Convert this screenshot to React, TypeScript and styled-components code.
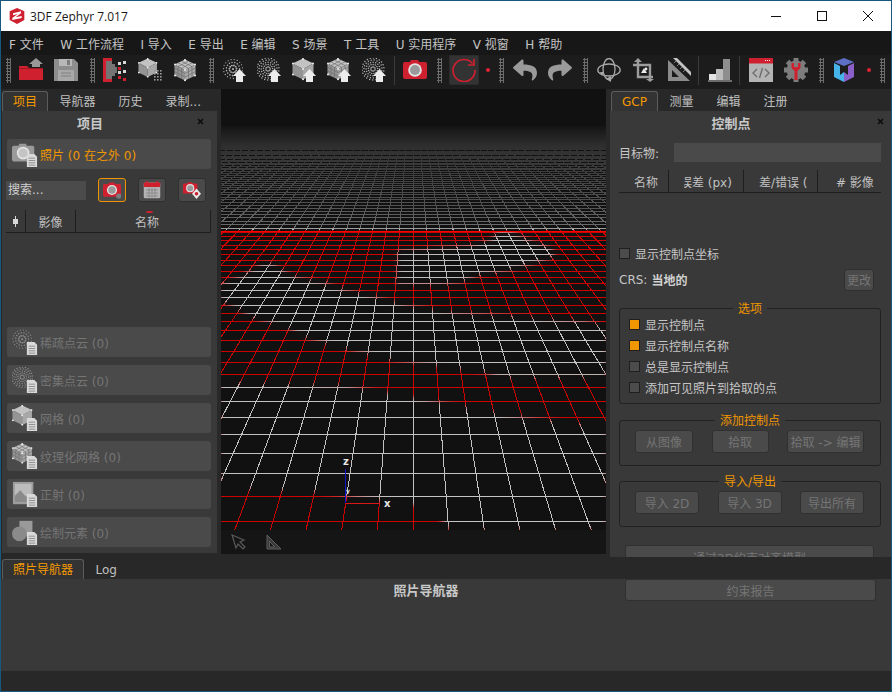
import React from "react";
import styled, { createGlobalStyle } from "styled-components";
import { FaReply, FaShare } from "react-icons/fa";

const GlobalStyle = createGlobalStyle`
  html, body {
    margin: 0;
    background: #282828;
  }
  body {
    width: 892px;
    height: 692px;
    overflow: hidden;
    font-family: "DejaVu Sans", "Noto Sans CJK SC", sans-serif;
    font-size: 12px;
    color: #c6c6c6;
  }
`;

/* ---------- icons ---------- */

const RED = "#cf2030";

const Svg = ({ size = 24, children }: { size?: number; children: React.ReactNode }) => (
  <svg width={size} height={size} viewBox="0 0 24 24">
    {children}
  </svg>
);

const Cloud = ({ dense, fill, r = 10 }: { dense?: boolean; fill: string; r?: number }) => {
  const dots: React.ReactNode[] = [];
  const rings = dense ? [0.2, 0.42, 0.62, 0.82, 1] : [0, 0.38, 0.7, 1];
  rings.forEach((k, i) => {
    const count = k === 0 ? 1 : Math.round((dense ? 10 : 7) + i * (dense ? 3 : 4));
    for (let j = 0; j < count; j++) {
      const a = (j / count) * Math.PI * 2 + i * 0.4;
      dots.push(
        <circle
          key={`${i}-${j}`}
          cx={11 + Math.cos(a) * r * k}
          cy={11 + Math.sin(a) * r * k}
          r={dense ? 0.75 : 1.1 - k * 0.45}
          fill={fill}
        />
      );
    }
  });
  return <>{dots}</>;
};

const CubeShape = ({ shade = "#c2c2c2", textured }: { shade?: string; textured?: boolean }) => (
  <>
    <polygon points="11,0.5 21.5,5.5 11,11 0.5,5.5" fill={shade} />
    <polygon points="0.5,5.5 11,11 11,21.5 0.5,16.5" fill="#949494" />
    <polygon points="21.5,5.5 11,11 11,21.5 21.5,16.5" fill="#a8a8a8" />
    {textured && (
      <g stroke="#6f6f6f" strokeWidth="0.7" fill="none">
        <path d="M4 3.8l10.5 5.4M7.5 2.2L18 7.6M18 3.8L7.5 9.2M14.5 2.2L4 7.6" />
        <path d="M4 7.4v10.8M7.5 9.1v10.8M14.5 9.1v10.8M18 7.4v10.8" />
        <path d="M.5 9l10.5 5.5L21.5 9M.5 12.6L11 18l10.5-5.4" />
      </g>
    )}
    <g fill="#eee">
      <circle cx="11" cy="1" r="1" />
      <circle cx="1" cy="5.5" r="1" />
      <circle cx="21" cy="5.5" r="1" />
      <circle cx="11" cy="11" r="1" />
      <circle cx="1" cy="16.5" r="1" />
      <circle cx="21" cy="16.5" r="1" />
      <circle cx="11" cy="21.2" r="1" />
    </g>
  </>
);

const UpArrow = () => (
  <polygon points="17.5,11 24,18 21,18 21,24 14,24 14,18 11,18" fill="#ececec" />
);

const CameraShape = ({ body = RED, lens = "#9a9a9a" }: { body?: string; lens?: string }) => (
  <>
    <path d="M7 4l1-2h7l1 2h6a2 2 0 0 1 2 2v13a2 2 0 0 1-2 2H2a2 2 0 0 1-2-2V6a2 2 0 0 1 2-2z" fill={body} />
    <circle cx="12" cy="12" r="6.8" fill="#e4e4e4" />
    <circle cx="12" cy="12" r="5" fill={lens} />
  </>
);

const FolderIcon = () => (
  <Svg>
    <path d="M0 8h8l2 2h14v12H0z" fill={RED} />
    <rect x="0" y="10" width="24" height="1" fill="#a11824" />
    <polygon points="17,0 24,6 21,6 21,9 13,9 13,6 10,6" fill="#989898" />
  </Svg>
);

const SaveIcon = () => (
  <Svg>
    <path d="M0 1h20l4 4v18H0z" fill="#8d8d8d" />
    <rect x="5" y="1" width="13" height="7" fill="#b8b8b8" />
    <rect x="13" y="2" width="3" height="5" fill="#7c7c7c" />
    <rect x="4" y="12" width="16" height="11" fill="#a8a8a8" />
    <path d="M7 15h10M7 18h10" stroke="#808080" />
  </Svg>
);

const DissolveIcon = () => (
  <Svg>
    <rect x="0" y="0" width="3" height="24" fill={RED} />
    <rect x="3" y="0" width="6" height="3" fill={RED} />
    <rect x="3" y="21" width="6" height="3" fill={RED} />
    <path d="M3 3h6v3h3v3h2v6h-2v3H9v3H3z" fill="#747474" />
    <g fill="#d8d8d8">
      <rect x="15" y="4" width="3" height="3" />
      <rect x="15" y="13" width="3" height="3" />
      <rect x="20" y="3" width="3" height="3" />
      <rect x="20" y="12" width="3" height="3" />
    </g>
    <g fill={RED}>
      <rect x="15" y="9" width="3" height="3" />
      <rect x="20" y="20" width="3" height="3" />
      <rect x="15" y="18" width="3" height="3" />
    </g>
  </Svg>
);

const CubeDotsIcon = () => (
  <Svg>
    <g transform="scale(0.88)">
      <CubeShape />
    </g>
    <g fill="#9c9c9c">
      {[0, 1, 2, 3].map((i) =>
        [0, 1, 2].map((j) => <rect key={`${i}${j}`} x={16 + j * 3} y={12 + i * 3} width="1.6" height="1.6" />)
      )}
    </g>
  </Svg>
);

const TexCubeIcon = () => (
  <Svg>
    <g transform="translate(1 1)">
      <CubeShape textured />
    </g>
  </Svg>
);

const CloudUpIcon = ({ dense }: { dense?: boolean }) => (
  <Svg>
    <Cloud dense={dense} fill="#b0b0b0" r={dense ? 11 : 9.5} />
    <UpArrow />
  </Svg>
);

const CubeUpIcon = ({ textured }: { textured?: boolean }) => (
  <Svg>
    <CubeShape textured={textured} />
    <UpArrow />
  </Svg>
);

const CameraIcon = () => (
  <Svg>
    <CameraShape />
  </Svg>
);

const RefreshIcon = () => (
  <Svg>
    <path d="M20.5 5.5A11 11 0 1 0 23 12" fill="none" stroke={RED} strokeWidth="1.7" />
    <path d="M22 1v6h-6" fill="none" stroke={RED} strokeWidth="1.7" />
  </Svg>
);

const OrbitIcon = () => (
  <Svg>
    <g fill="none" stroke="#a8a8a8" strokeWidth="1.3">
      <ellipse cx="12" cy="12" rx="11.2" ry="6" />
      <ellipse cx="12" cy="11" rx="6" ry="10.5" />
    </g>
    <polygon points="9,21 14,18 14,24" fill="#a8a8a8" />
    <polygon points="3,14 7,14 5,18" fill="#a8a8a8" />
  </Svg>
);

const CropIcon = () => (
  <Svg>
    <g fill="none" stroke="#9c9c9c" strokeWidth="2.4">
      <path d="M6 4v15h15" />
      <path d="M1 7h17v14" />
    </g>
    <polygon points="6,0 10,4 2,4" fill="#9c9c9c" />
    <polygon points="18,24 14,21 22,21" fill="#9c9c9c" />
    <polygon points="9,15 12,10 15,15" fill="#e8e8e8" />
    <circle cx="14" cy="11" r="1.4" fill="#e8e8e8" />
  </Svg>
);

const RulerIcon = () => (
  <Svg>
    <path d="M1 2v21h22zM5 12l7 7H5z" fill="#8b8b8b" fillRule="evenodd" />
    <polygon points="6,0 10,0 24,14 24,18" fill="#c4c4c4" />
    <path d="M9 3l-2 2M12 6l-2 2M15 9l-2 2M18 12l-2 2" stroke="#7a7a7a" />
  </Svg>
);

const StairsIcon = () => (
  <Svg>
    <rect x="1" y="16" width="7" height="6" fill="#e2e2e2" />
    <rect x="8" y="11" width="7" height="11" fill="#bcbcbc" />
    <rect x="15" y="1" width="7" height="21" fill="#8e8e8e" />
    <rect x="0" y="22" width="24" height="2" fill="#6c6c6c" />
  </Svg>
);

const CodeIcon = () => (
  <Svg>
    <rect x="0" y="0" width="24" height="24" fill="#b4b4b4" />
    <rect x="0" y="0" width="24" height="5.5" fill={RED} />
    <path d="M16 2.5h5" stroke="#eee" strokeDasharray="1 1" />
    <path d="M8 11l-4 4 4 4M16 11l4 4-4 4M13.5 10l-3 10" fill="none" stroke="#6e6e6e" strokeWidth="1.4" />
  </Svg>
);

const GearIcon = () => (
  <Svg>
    <g fill="#7d7d7d">
      <circle cx="12" cy="12" r="9.5" />
      {[0, 45, 90, 135, 180, 225, 270, 315].map((a) => (
        <rect key={a} x="9.5" y="0" width="5" height="5" transform={`rotate(${a} 12 12)`} />
      ))}
    </g>
    <path d="M7.5 5v5l3 3v9h3v-9l3-3V5h-2.5v4h-4V5z" fill={RED} />
  </Svg>
);

const MetaCubeIcon = () => (
  <Svg>
    <polygon points="11,0 21,4 11,8 1,4" fill="#5c6fc4" />
    <polygon points="1,5 7,8 7,17 11,14 11,24 1,19" fill="#46b4e8" />
    <polygon points="21,5 15,8 15,17 11,14 11,24 21,19" fill="#8a5fc8" />
  </Svg>
);

const TitleLogo = () => (
  <svg width="16" height="16" viewBox="0 0 24 24">
    <polygon points="12,0 23,5 23,18 12,24 1,18 1,5" fill={RED} />
    <path d="M6 8l12-3v3l-8 6 9-2v3L5 18v-3l8-6-7 2z" fill="#fff" />
  </svg>
);

const DocBadge = () => (
  <g>
    <path d="M16 14h8l3 3v11H16z" fill="#d9d9d9" />
    <path d="M18 18.5h7M18 21h7M18 23.5h7M18 26h7" stroke="#8a8a8a" />
  </g>
);

const PanelIcon = ({ children }: { children: React.ReactNode }) => (
  <svg width="26" height="26" viewBox="0 0 28 28">
    {children}
    <DocBadge />
  </svg>
);

const CursorIcon = () => (
  <svg width="16" height="16" viewBox="0 0 16 16">
    <path d="M1 1l12 5-4 2 5 5-2 2-5-5-2 4z" fill="none" stroke="#5a5a5a" strokeWidth="1.2" />
  </svg>
);

const SetSquareIcon = () => (
  <svg width="16" height="16" viewBox="0 0 16 16">
    <path d="M1 1v14h14zM3.5 7l5 6h-5z" fill="#3a3a3a" stroke="#5e5e5e" fillRule="evenodd" />
  </svg>
);

const CloseMark = () => (
  <svg width="7" height="7" viewBox="0 0 7 7">
    <path d="M1 1l5 5M6 1L1 6" stroke="#0c0c0c" strokeWidth="1.6" />
  </svg>
);

/* ---------- the 3D viewport drawing ---------- */

const HORIZON = 50;
const CENTER_X = 413;
const SLOPE = 0.0743;
const FLOOR_Y = 530;
const TOP_Y = 126;

const rowY = (n: number) => Math.round(HORIZON + 1 / (0.002123 + 0.0001204 * n)) + 0.5;

const rows = Array.from({ length: 92 }, (_, i) => rowY(i)).filter((y) => y > TOP_Y);
const columns = Array.from({ length: 73 }, (_, i) => i - 36);

const GridLines = ({ stroke }: { stroke: string }) => (
  <g stroke={stroke} strokeWidth="1" shapeRendering="crispEdges" fill="none">
    {rows.map((y) => (
      <line key={y} x1="221" x2="606" y1={y} y2={y} />
    ))}
    {columns.map((i) => (
      <line
        key={i}
        x1={CENTER_X + i * SLOPE * (TOP_Y - HORIZON)}
        y1={TOP_Y}
        x2={CENTER_X + i * SLOPE * (FLOOR_Y - HORIZON)}
        y2={FLOOR_Y}
      />
    ))}
  </g>
);

const clearAreas = [
  "497,232 512,232 530,240 552,248 556,255 540,262 512,270 480,275 462,282 440,285 397,285 397,250 440,247 470,245 490,240",
  "262,263 272,263 283,270 297,277 323,282 343,289 377,297 407,305 455,312 585,321 607,326 607,378 500,378 483,372 390,360 347,349 307,338 288,328 253,318 238,310 220,300 220,285 227,281 240,276 253,269",
  "220,382 345,385 430,400 510,415 607,428 607,530 450,530 430,508 320,492 220,488",
];

const GridDrawing = () => (
  <svg width="385" height="441" viewBox="221 89 385 441" style={{ display: "block" }}>
    <defs>
      <linearGradient id="gridFade" gradientUnits="userSpaceOnUse" x1="0" y1="125" x2="0" y2="530">
        <stop offset="0" stopColor="#131313" />
        <stop offset="0.05" stopColor="#2e2e2e" />
        <stop offset="0.2" stopColor="#525252" />
        <stop offset="0.255" stopColor="#707070" />
        <stop offset="0.256" stopColor="#bdbdbd" />
        <stop offset="1" stopColor="#c4c4c4" />
      </linearGradient>
      <filter id="soft" x="-5%" y="-5%" width="110%" height="110%">
        <feGaussianBlur stdDeviation="2.5" />
      </filter>
      <mask id="redMask" maskUnits="userSpaceOnUse" x="221" y="89" width="385" height="441">
        <rect x="221" y="89" width="385" height="441" fill="#fff" />
        <g filter="url(#soft)" fill="#000">
          {clearAreas.map((p) => (
            <polygon key={p} points={p} />
          ))}
        </g>
      </mask>
      <clipPath id="redFloor">
        <rect x="221" y="230" width="385" height="300" />
      </clipPath>
    </defs>
    <rect x="221" y="89" width="385" height="441" fill="#111" />
    <GridLines stroke="url(#gridFade)" />
    <g clipPath="url(#redFloor)">
      <g mask="url(#redMask)">
        <GridLines stroke="#cc0000" />
      </g>
    </g>
    <line x1="221" x2="606" y1="231.5" y2="231.5" stroke="#ff0000" shapeRendering="crispEdges" />
    <line x1="345.5" x2="345.5" y1="469" y2="503" stroke="#1414c8" shapeRendering="crispEdges" />
    <line x1="346" x2="380" y1="503.5" y2="503.5" stroke="#d81818" shapeRendering="crispEdges" />
    <g fill="#e8e8e8" fontFamily="'DejaVu Sans', sans-serif" fontWeight="700" fontSize="10">
      <text x="343" y="465">z</text>
      <text x="384" y="507">x</text>
      <text x="346" y="493" fontSize="6">y</text>
    </g>
  </svg>
);

/* ---------- page structure ---------- */

const Frame = styled.div`
  box-sizing: border-box;
  width: 892px;
  height: 692px;
  border: 1px solid #17587c;
  display: flex;
  flex-direction: column;
  background: #282828;
  overflow: hidden;
`;

const TitleBar = styled.header`
  height: 30px;
  flex: none;
  background: #fff;
  color: #1a1a1a;
  display: flex;
  align-items: center;
  padding-left: 8px;
  gap: 5px;
  font-size: 12px;
`;

const TitleText = styled.span`
  flex: 1;
  font-family: "Open Sans", "Noto Sans", sans-serif;
`;

const WindowButton = styled.div`
  width: 46px;
  height: 30px;
  margin-left: -5px;
  display: flex;
  align-items: center;
  justify-content: center;
`;

const MenuBar = styled.nav`
  height: 24px;
  flex: none;
  background: #171717;
  display: flex;
  align-items: center;
  gap: 16.5px;
  padding-left: 8px;
`;

const MenuItem = styled.span`
  white-space: pre;
  color: #c4c4c4;
`;

const Toolbar = styled.div`
  height: 34px;
  flex: none;
  box-sizing: border-box;
  background: #1c1c1c;
  padding: 0 0 4px;
  display: flex;
  align-items: center;
`;

const Tool = styled.div<{ $active?: boolean }>`
  width: 35px;
  height: 30px;
  flex: none;
  display: flex;
  align-items: center;
  justify-content: center;
  ${(p) =>
    p.$active &&
    "background: #333; border-radius: 2px; box-shadow: inset 0 0 0 1px #2c2c2c; margin: 0 2px 0 4.5px; width: 30px;"}
`;

const Grip = styled.div`
  width: 5px;
  height: 25px;
  flex: none;
  margin: 0 3px 0 6px;
  background-image: radial-gradient(circle at 1.5px 1.5px, #6c6c6c 1px, transparent 1.2px);
  background-size: 3px 3px;
`;

const FirstGrip = styled(Grip)`
  margin-left: 4.5px;
`;

const NarrowGrip = styled(Grip)`
  margin-left: 4px;
`;

const ToolDivider = styled.div`
  width: 1px;
  height: 29px;
  flex: none;
  margin: 0 3px 0 2px;
  background: #3a3a3a;
`;

const RedDot = styled.div`
  width: 14px;
  flex: none;
  display: flex;
  justify-content: center;
  &::after {
    content: "";
    width: 4px;
    height: 4px;
    border-radius: 50%;
    background: #e02234;
  }
`;

const Workspace = styled.main`
  flex: 1;
  min-height: 0;
  display: flex;
`;

const LeftDock = styled.aside`
  width: 220px;
  flex: none;
  display: flex;
  flex-direction: column;
  padding-bottom: 1px;
  box-sizing: border-box;
`;

const RightDock = styled.aside`
  flex: 1;
  min-width: 0;
  display: flex;
  flex-direction: column;
  padding-left: 4px;
  margin-bottom: -3px;
  position: relative;
  z-index: 1;
  overflow: hidden;
`;

const TabStrip = styled.div`
  height: 22px;
  flex: none;
  box-sizing: border-box;
  padding: 2px 0 0 1px;
  display: flex;
`;

const BottomTabStrip = styled(TabStrip)`
  height: 20px;
  padding-top: 0;
`;

const Tab = styled.div<{ $active?: boolean }>`
  height: 20px;
  box-sizing: border-box;
  padding: 0 ${(p) => (p.$active ? "10px" : "11.5px")};
  line-height: ${(p) => (p.$active ? "20px" : "22px")};
  white-space: nowrap;
  color: ${(p) => (p.$active ? "#f59a00" : "#c0c0c0")};
  ${(p) =>
    p.$active &&
    `
    border: 1px solid #5c5c5c;
    border-bottom: 0;
    border-radius: 3px 3px 0 0;
    background: #333;
  `}
`;

const Panel = styled.section`
  flex: 1;
  min-height: 0;
  background: #393939;
  display: flex;
  flex-direction: column;
`;

const LeftPanel = styled(Panel)`
  padding: 0 6px 6px 5px;
  margin: 0 4px 0 1px;
`;

const RightPanel = styled(Panel)`
  padding: 0 10px 0 9px;
`;

const PanelHeader = styled.div`
  height: 24px;
  flex: none;
  position: relative;
  box-sizing: border-box;
  padding: 0 38px 2px 0;
  display: flex;
  align-items: center;
  justify-content: center;
  font-size: 13px;
  font-weight: 700;
  color: #c8c8c8;
`;

const CloseSpot = styled.span<{ $right: number }>`
  position: absolute;
  right: ${(p) => p.$right}px;
  top: 7px;
  line-height: 0;
`;

const DataRow = styled.div<{ $on?: boolean }>`
  height: 30px;
  flex: none;
  box-sizing: border-box;
  background: #4a4a4a;
  border-radius: 3px;
  padding-left: 5px;
  display: flex;
  align-items: center;
  gap: 2px;
  font-size: 12px;
  white-space: pre;
  color: ${(p) => (p.$on ? "#f09600" : "#757575")};
`;

const RowStack = styled.div`
  display: flex;
  flex-direction: column;
  gap: 8px;
`;

const FirstRow = styled(DataRow)`
  margin-top: 4px;
`;

const SearchRow = styled.div`
  height: 24px;
  flex: none;
  margin: 9px 0 0 -1px;
  display: flex;
  align-items: center;
  gap: 12px;
`;

const SearchBox = styled.div`
  width: 80px;
  height: 19px;
  flex: none;
  box-sizing: border-box;
  background: #4b4b4b;
  padding-left: 2px;
  line-height: 18px;
  color: #d0d0d0;
`;

const FilterButton = styled.div<{ $on?: boolean }>`
  width: 28px;
  height: 24px;
  flex: none;
  box-sizing: border-box;
  border-radius: 3px;
  background: #4a4a4a;
  border: 1px solid ${(p) => (p.$on ? "#f09600" : "#2f2f2f")};
  display: flex;
  align-items: center;
  justify-content: center;
`;

const TableHead = styled.div`
  height: 23px;
  flex: none;
  display: flex;
  box-sizing: border-box;
  border-bottom: 1px solid #1e1e1e;
`;

const LeftTableHead = styled(TableHead)`
  margin: 8px 0 0 -1px;
  position: relative;
`;

const RightTableHead = styled(TableHead)`
  margin-top: 8px;
`;

const HeadCell = styled.div<{ $width?: number; $pad?: number }>`
  ${(p) => (p.$width ? `width: ${p.$width}px; flex: none;` : "flex: 1;")}
  box-sizing: border-box;
  padding-left: ${(p) => p.$pad ?? 0}px;
  border-right: 1px solid #1e1e1e;
  display: flex;
  align-items: center;
  justify-content: ${(p) => (p.$pad === undefined ? "center" : "flex-start")};
  color: #c0c0c0;
  overflow: hidden;
  white-space: pre;
  &:last-child {
    border-right: 0;
  }
`;

const HeadClip = styled.span<{ $width: number; $indent: number }>`
  display: block;
  width: ${(p) => p.$width}px;
  overflow: hidden;
  text-indent: -${(p) => p.$indent}px;
`;

const SortMark = styled.span`
  position: absolute;
  left: 140px;
  top: 1px;
  width: 7px;
  height: 2px;
  border-radius: 4px 4px 0 0;
  background: #cf2030;
`;

const ListArea = styled.div`
  flex: 1;
`;

const TargetRow = styled.div`
  height: 19px;
  flex: none;
  margin-top: 8px;
  display: flex;
  align-items: center;
`;

const TargetLabel = styled.span`
  width: 55px;
  flex: none;
`;

const TargetInput = styled.div`
  flex: 1;
  height: 19px;
  background: #4a4a4a;
`;

const CheckRow = styled.div<{ $height?: number }>`
  height: ${(p) => p.$height ?? 21}px;
  flex: none;
  display: flex;
  align-items: center;
  gap: 5px;
`;

const CoordRow = styled(CheckRow)`
  margin-top: 53px;
`;

const Check = styled.span<{ $on?: boolean }>`
  width: 11px;
  height: 11px;
  flex: none;
  box-sizing: border-box;
  border: 1px solid #1f1f1f;
  background: ${(p) => (p.$on ? "#f09600" : "#4c4c4c")};
`;

const CrsRow = styled.div`
  height: 21px;
  flex: none;
  margin-top: 9px;
  padding-right: 7px;
  display: flex;
  align-items: center;
  gap: 4px;
`;

const CrsValue = styled.b`
  flex: 1;
  color: #d0d0d0;
`;

const GhostButton = styled.div<{ $width?: number }>`
  ${(p) => (p.$width ? `width: ${p.$width}px; flex: none;` : "")}
  height: 22px;
  box-sizing: border-box;
  background: #4a4a4a;
  border: 1px solid #303030;
  border-radius: 3px;
  display: flex;
  align-items: center;
  justify-content: center;
  color: #757575;
  white-space: pre;
`;

const Group = styled.fieldset<{ $top: number }>`
  margin: ${(p) => p.$top}px 0 0;
  padding: 0 9px 5px;
  border: 1px solid #222;
  border-radius: 3px;
  min-width: 0;
  flex: none;
`;

const ButtonGroup = styled(Group)`
  padding: 0;
`;

const GroupTitle = styled.legend`
  margin: 0 auto -2px;
  padding: 2px 5px 0;
  line-height: 13px;
  color: #f09600;
`;

const ButtonLine = styled.div`
  display: flex;
  justify-content: space-between;
  padding: 4px 16px 12px 15px;
`;

const GroupButton = styled(GhostButton)`
  height: 23px;
`;

const WideButton = styled(GhostButton)`
  margin: 18px 7px 0 6px;
  flex: none;
  height: 24px;
`;

const Viewport = styled.div`
  width: 385px;
  flex: none;
  display: flex;
  flex-direction: column;
  background: #151515;
`;

const ViewportTools = styled.div`
  flex: 1;
  display: flex;
  align-items: center;
  gap: 19px;
  padding: 0 0 1px 10px;
`;

const BottomDock = styled.div`
  height: 117px;
  flex: none;
  padding-top: 5px;
  box-sizing: border-box;
  display: flex;
  flex-direction: column;
`;

const BottomPanel = styled.section`
  flex: 1;
  position: relative;
  background: #393939;
  text-align: center;
  padding-right: 40px;
  font-size: 13px;
  font-weight: 700;
  line-height: 24px;
  color: #c8c8c8;
`;

const ReportButton = styled(GhostButton)`
  position: absolute;
  left: 624px;
  top: 0;
  width: 251px;
  font-size: 12px;
  font-weight: 400;
  line-height: normal;
`;

const StatusBar = styled.footer`
  height: 20px;
  flex: none;
  background: #282828;
`;

const menus = ["F 文件", "W 工作流程", "I 导入", "E 导出", "E 编辑", "S 场景", "T 工具", "U 实用程序", "V 视窗", "H 帮助"];

const App = () => (
  <>
    <GlobalStyle />
    <Frame>
      <TitleBar>
        <TitleLogo />
        <TitleText>3DF Zephyr 7.017</TitleText>
        <WindowButton>
          <svg width="10" height="10">
            <path d="M0 5.5h10" stroke="#111" />
          </svg>
        </WindowButton>
        <WindowButton>
          <svg width="10" height="10">
            <rect x="0.5" y="0.5" width="9" height="9" fill="none" stroke="#111" />
          </svg>
        </WindowButton>
        <WindowButton>
          <svg width="10" height="10">
            <path d="M0 0l10 10M10 0L0 10" stroke="#111" />
          </svg>
        </WindowButton>
      </TitleBar>

      <MenuBar>
        {menus.map((m, i) => (
          <MenuItem key={i}>{m}</MenuItem>
        ))}
      </MenuBar>

      <Toolbar>
        <FirstGrip />
        <Tool><FolderIcon /></Tool>
        <Tool><SaveIcon /></Tool>
        <Grip />
        <Tool><DissolveIcon /></Tool>
        <Tool><CubeDotsIcon /></Tool>
        <Tool><TexCubeIcon /></Tool>
        <Grip />
        <Tool><CloudUpIcon /></Tool>
        <Tool><CloudUpIcon dense /></Tool>
        <Tool><CubeUpIcon /></Tool>
        <Tool><CubeUpIcon textured /></Tool>
        <Tool><CloudUpIcon dense /></Tool>
        <ToolDivider />
        <Tool><CameraIcon /></Tool>
        <NarrowGrip />
        <Tool $active><RefreshIcon /></Tool>
        <RedDot />
        <NarrowGrip />
        <Tool><FaReply size={24} color="#9a9a9a" /></Tool>
        <Tool><FaShare size={24} color="#9a9a9a" /></Tool>
        <Grip />
        <Tool><OrbitIcon /></Tool>
        <Tool><CropIcon /></Tool>
        <Tool><RulerIcon /></Tool>
        <ToolDivider />
        <Tool><StairsIcon /></Tool>
        <ToolDivider />
        <Tool><CodeIcon /></Tool>
        <Tool><GearIcon /></Tool>
        <Grip />
        <Tool><MetaCubeIcon /></Tool>
        <RedDot />
        <NarrowGrip />
      </Toolbar>

      <Workspace>
        <LeftDock>
          <TabStrip>
            <Tab $active>项目</Tab>
            <Tab>导航器</Tab>
            <Tab>历史</Tab>
            <Tab>录制...</Tab>
          </TabStrip>
          <LeftPanel>
            <PanelHeader>
              项目
              <CloseSpot $right={7}>
                <CloseMark />
              </CloseSpot>
            </PanelHeader>
            <FirstRow $on>
              <PanelIcon>
                <g transform="translate(0 1)">
                  <CameraShape body="#9a9a9a" lens="#c4c4c4" />
                </g>
              </PanelIcon>
              照片 (0 在之外 0)
            </FirstRow>
            <SearchRow>
              <SearchBox>搜索...</SearchBox>
              <FilterButton $on>
                <svg width="18" height="18" viewBox="0 0 24 24">
                  <CameraShape />
                  <circle cx="21" cy="20" r="3.5" fill="#7b7b7b" />
                </svg>
              </FilterButton>
              <FilterButton>
                <svg width="18" height="18" viewBox="0 0 24 24">
                  <rect x="1" y="2" width="22" height="21" rx="2" fill="#b4b4b4" />
                  <rect x="1" y="2" width="22" height="6" rx="1" fill="#cf2030" />
                  <path d="M5 0v4M19 0v4" stroke="#cf2030" strokeWidth="2" />
                  <path d="M4 12h16M4 16h16M4 20h16M8 9v13M12 9v13M16 9v13" stroke="#808080" />
                </svg>
              </FilterButton>
              <FilterButton>
                <svg width="18" height="18" viewBox="0 0 24 24">
                  <g transform="scale(0.8)">
                    <CameraShape />
                  </g>
                  <polygon points="18,10 24,17 18,24 12,17" fill="#e8e8e8" />
                  <circle cx="18" cy="17" r="2.4" fill="#cf2030" />
                </svg>
              </FilterButton>
            </SearchRow>
            <LeftTableHead>
              <HeadCell $width={20}>
                <svg width="7" height="11">
                  <path d="M3.5 0v11" stroke="#d8d8d8" />
                  <rect x="1" y="3" width="5" height="5" fill="#d8d8d8" />
                </svg>
              </HeadCell>
              <HeadCell $width={50}>影像</HeadCell>
              <HeadCell $pad={59}>名称</HeadCell>
              <SortMark />
            </LeftTableHead>
            <ListArea />
            <RowStack>
              <DataRow>
                <PanelIcon><Cloud fill="#8d8d8d" /></PanelIcon>
                稀疏点云 (0)
              </DataRow>
              <DataRow>
                <PanelIcon><Cloud dense fill="#8d8d8d" r={11} /></PanelIcon>
                密集点云 (0)
              </DataRow>
              <DataRow>
                <PanelIcon><CubeShape /></PanelIcon>
                网格 (0)
              </DataRow>
              <DataRow>
                <PanelIcon><CubeShape textured /></PanelIcon>
                纹理化网格 (0)
              </DataRow>
              <DataRow>
                <PanelIcon>
                  <rect x="1" y="1" width="22" height="24" fill="#9b9b9b" />
                  <rect x="3" y="3" width="18" height="20" fill="#bcbcbc" />
                  <polygon points="3,23 3,16 9,10 15,17 18,14 21,17 21,23" fill="#8a8a8a" />
                </PanelIcon>
                正射 (0)
              </DataRow>
              <DataRow>
                <PanelIcon>
                  <rect x="8" y="2" width="14" height="16" fill="#9a9a9a" />
                  <circle cx="8" cy="16" r="8" fill="#8a8a8a" />
                </PanelIcon>
                绘制元素 (0)
              </DataRow>
            </RowStack>
          </LeftPanel>
        </LeftDock>

        <Viewport>
          <GridDrawing />
          <ViewportTools>
            <CursorIcon />
            <SetSquareIcon />
          </ViewportTools>
        </Viewport>

        <RightDock>
          <TabStrip>
            <Tab $active>GCP</Tab>
            <Tab>测量</Tab>
            <Tab>编辑</Tab>
            <Tab>注册</Tab>
          </TabStrip>
          <RightPanel>
            <PanelHeader>
              控制点
              <CloseSpot $right={-3}>
                <CloseMark />
              </CloseSpot>
            </PanelHeader>
            <TargetRow>
              <TargetLabel>目标物:</TargetLabel>
              <TargetInput />
            </TargetRow>
            <RightTableHead>
              <HeadCell $width={50} $pad={15}>名称</HeadCell>
              <HeadCell $width={75} $pad={15}>
                <HeadClip $width={56} $indent={4}>误差 (px)</HeadClip>
              </HeadCell>
              <HeadCell $width={74} $pad={15}>
                <HeadClip $width={49} $indent={12}>误差/错误 (px)</HeadClip>
              </HeadCell>
              <HeadCell $pad={18}># 影像</HeadCell>
            </RightTableHead>
            <CoordRow $height={14}>
              <Check />
              显示控制点坐标
            </CoordRow>
            <CrsRow>
              CRS: <CrsValue>当地的</CrsValue>
              <GhostButton $width={30}>更改</GhostButton>
            </CrsRow>
            <Group $top={11}>
              <GroupTitle>选项</GroupTitle>
              <CheckRow><Check $on />显示控制点</CheckRow>
              <CheckRow><Check $on />显示控制点名称</CheckRow>
              <CheckRow><Check />总是显示控制点</CheckRow>
              <CheckRow><Check />添加可见照片到拾取的点</CheckRow>
            </Group>
            <ButtonGroup $top={9}>
              <GroupTitle>添加控制点</GroupTitle>
              <ButtonLine>
                <GroupButton $width={58}>从图像</GroupButton>
                <GroupButton $width={57}>拾取</GroupButton>
                <GroupButton $width={77}>拾取 -&gt; 编辑</GroupButton>
              </ButtonLine>
            </ButtonGroup>
            <ButtonGroup $top={8}>
              <GroupTitle>导入/导出</GroupTitle>
              <ButtonLine>
                <GroupButton $width={64}>导入 2D</GroupButton>
                <GroupButton $width={64}>导入 3D</GroupButton>
                <GroupButton $width={64}>导出所有</GroupButton>
              </ButtonLine>
            </ButtonGroup>
            <WideButton>通过3D约束对齐模型</WideButton>
          </RightPanel>
        </RightDock>
      </Workspace>

      <BottomDock>
        <BottomTabStrip>
          <Tab $active>照片导航器</Tab>
          <Tab>Log</Tab>
        </BottomTabStrip>
        <BottomPanel>
          照片导航器
          <ReportButton>约束报告</ReportButton>
        </BottomPanel>
      </BottomDock>
      <StatusBar />
    </Frame>
  </>
);

export default App;
